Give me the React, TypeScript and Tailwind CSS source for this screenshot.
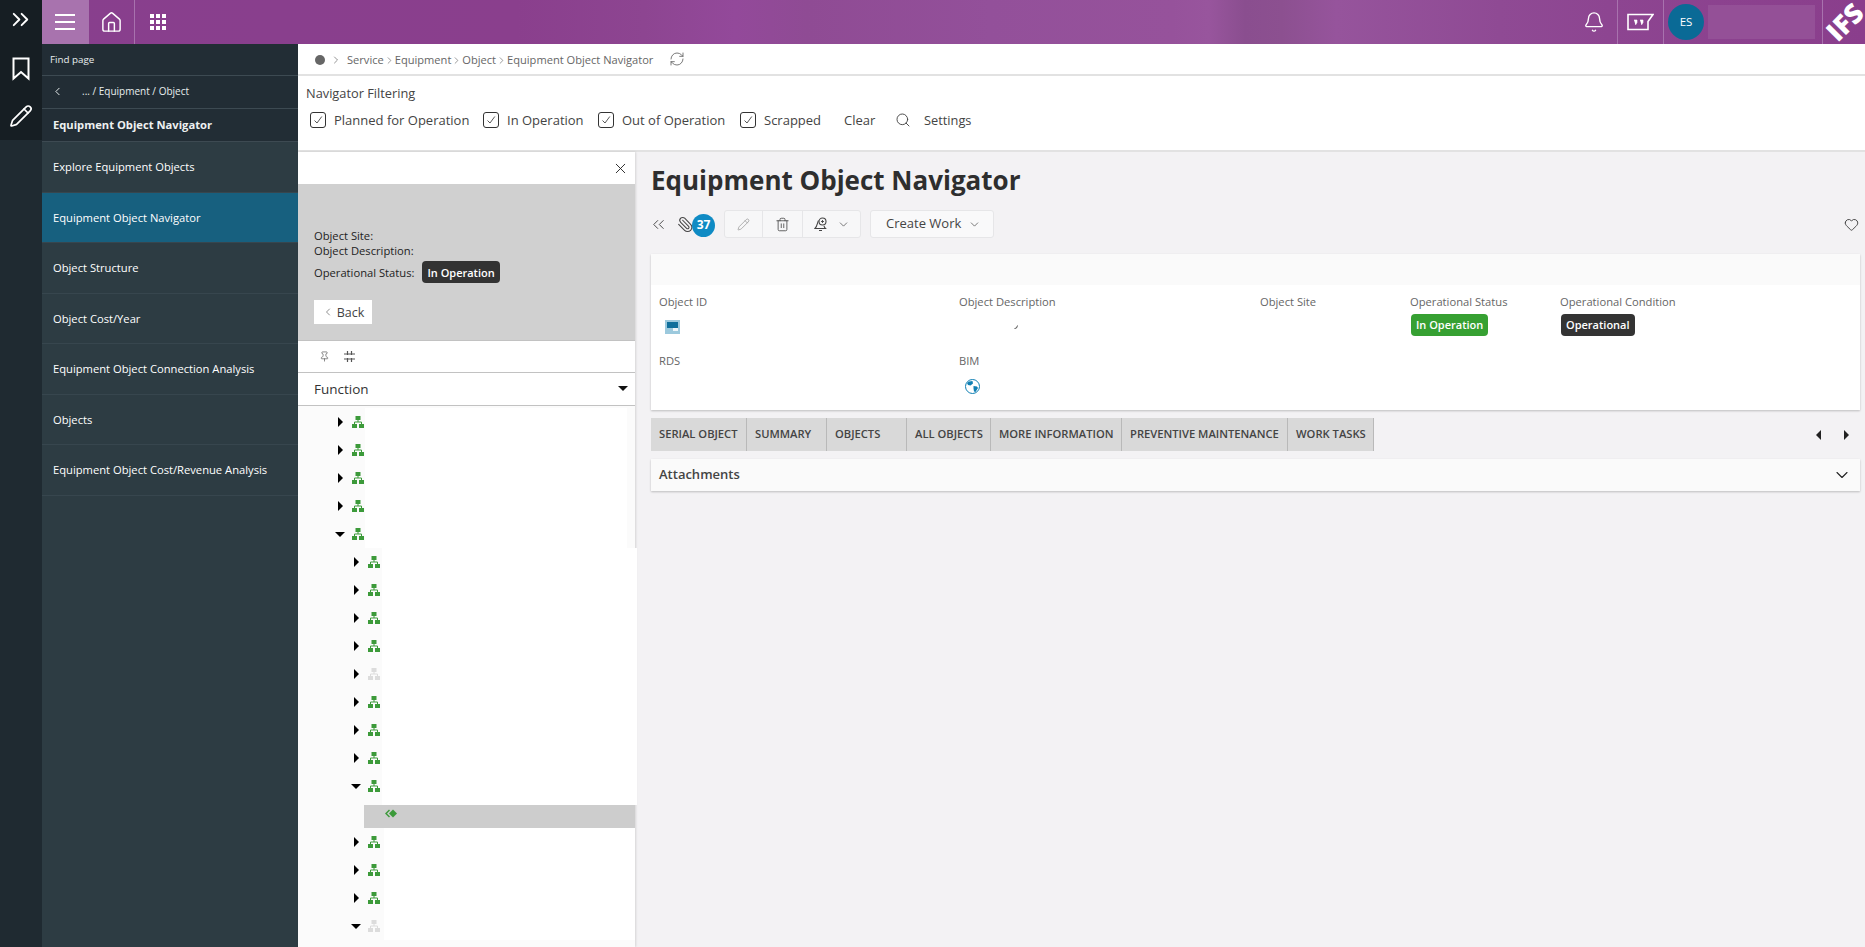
import React from 'react';
import { Bell, ChevronDown, ChevronLeft, ChevronRight, ChevronsLeft, ChevronsRight, Heart, House, Paperclip, Pencil, Pin, RefreshCw, Search, Trash2, X } from 'lucide-react';

const sideItems = [
  'Explore Equipment Objects',
  'Equipment Object Navigator',
  'Object Structure',
  'Object Cost/Year',
  'Equipment Object Connection Analysis',
  'Objects',
  'Equipment Object Cost/Revenue Analysis',
];

const tabs = [
  { label: 'Serial Object', w: 'w-[96px]' },
  { label: 'Summary', w: 'w-[80px]' },
  { label: 'Objects', w: 'w-[80px]' },
  { label: 'All Objects', w: 'w-[84px]' },
  { label: 'More Information', w: 'w-[131px]' },
  { label: 'Preventive Maintenance', w: 'w-[166px]' },
  { label: 'Work Tasks', w: 'w-[86px]' },
];

const filters = [
  { label: 'Planned for Operation', w: 'w-[173px]' },
  { label: 'In Operation', w: 'w-[115px]' },
  { label: 'Out of Operation', w: 'w-[142px]' },
  { label: 'Scrapped', w: 'w-[104px]' },
];

type TreeRow = { level: 0 | 1; open?: boolean; muted?: boolean; tall?: boolean; inset?: boolean };

const treeTop: TreeRow[] = [
  { level: 0 },
  { level: 0 },
  { level: 0 },
  { level: 0 },
  { level: 0, open: true },
  { level: 1 },
  { level: 1 },
  { level: 1 },
  { level: 1 },
  { level: 1, muted: true },
  { level: 1 },
  { level: 1 },
  { level: 1 },
  { level: 1, open: true, tall: true },
];

const treeBottom: TreeRow[] = [
  { level: 1, inset: true },
  { level: 1, inset: true },
  { level: 1, inset: true },
  { level: 1, open: true, muted: true, inset: true },
];

const OrgIcon = ({ muted }: { muted?: boolean }) => (
  <svg width="12" height="12" viewBox="0 0 12 12" className={muted ? 'text-[#dcdcdc]' : 'text-[#3c9a3a]'}>
    <rect x="3.5" y="0" width="5" height="4" fill="currentColor" />
    <path d="M6 4v2M2.5 8V6h7v2" stroke="currentColor" strokeWidth="1" fill="none" />
    <rect x="0" y="8" width="5" height="4" fill="currentColor" />
    <rect x="7" y="8" width="5" height="4" fill="currentColor" />
  </svg>
);

const Caret = ({ open }: { open?: boolean }) => (
  <svg width="10" height="10" viewBox="0 0 10 10" className="text-black">
    {open ? <polygon points="0,3 10,3 5,8" fill="currentColor" /> : <polygon points="3,0 8,5 3,10" fill="currentColor" />}
  </svg>
);

const TreeItem = ({ row }: { row: TreeRow }) => (
  <div className={`flex ${row.tall ? 'h-[33px]' : 'h-[28px]'} ${row.level === 0 ? 'pl-[37px]' : 'pl-[53px]'}`}>
    <div className="flex h-[28px] items-center">
      <Caret open={row.open} />
      <div className="ml-[7px]">
        <OrgIcon muted={row.muted} />
      </div>
    </div>
    <div
      className={`flex-1 bg-white ${row.level === 0 ? 'ml-[1px] mr-[8px]' : row.inset ? 'ml-[4px]' : 'ml-[2px] mr-[-2px]'}`}
    />
  </div>
);

const Checkbox = () => (
  <span className="flex h-[16px] w-[16px] items-center justify-center rounded-[3px] border border-[#333]">
    <svg width="10" height="10" viewBox="0 0 10 10" fill="none" stroke="#444" strokeWidth="0.9">
      <path d="M1.5 5.5 4 8l4.8-6.5" />
    </svg>
  </span>
);

const Label = ({ children }: { children: React.ReactNode }) => (
  <div className="h-[16px] text-[11.2px] leading-[16px] text-[#666]">{children}</div>
);

export default function App() {
  return (
    <div className="flex h-[947px] w-[1865px] overflow-hidden bg-[#f3f2f4] font-['Open_Sans',sans-serif]">
      {/* icon rail */}
      <div className="flex w-[42px] shrink-0 flex-col bg-[#1f2a31]">
        <div className="flex h-[140px] flex-col items-center bg-[#161e23] text-white">
          <ChevronsRight size={27} strokeWidth={1.7} className="mt-[6px] -translate-x-[1px]" />
          <svg width="18" height="24" viewBox="0 0 18 24" fill="none" stroke="currentColor" strokeWidth="2" className="mt-[24px]">
            <path d="M1.5 1.5h15v20L9 15l-7.5 6.5z" />
          </svg>
          <Pencil size={24} strokeWidth={1.7} className="mt-[23px]" />
        </div>
      </div>

      <div className="flex min-w-0 flex-1 flex-col">
        {/* top bar */}
        <div className="flex h-[44px] shrink-0 items-stretch bg-[linear-gradient(90deg,#883f8d_0%,#8a3f8d_26%,#8d4591_33%,#93499a_38%,#8f4b94_42%,#93509a_52%,#96529b_62%,#98559d_64%,#8a4e8f_66%,#8c5090_68%,#96549c_71%,#8f4a94_80%,#8d4591_86%,#8a3e8c_100%)]">
          <div className="flex w-[47px] items-center bg-[#a873ae] pl-[13px]">
            <div className="flex w-[20px] flex-col gap-[5px]">
              <div className="h-[2px] bg-white" />
              <div className="h-[2px] bg-white" />
              <div className="h-[2px] bg-white" />
            </div>
          </div>
          <div className="flex w-[46px] items-center justify-center border-r border-[#a872ae] text-white">
            <House size={23} strokeWidth={1.5} />
          </div>
          <div className="flex w-[46px] items-center justify-center text-white">
            <svg width="16" height="16" viewBox="0 0 16 16" fill="currentColor">
              <rect x="0" y="0" width="4" height="4" />
              <rect x="6" y="0" width="4" height="4" />
              <rect x="12" y="0" width="4" height="4" />
              <rect x="0" y="6" width="4" height="4" />
              <rect x="6" y="6" width="4" height="4" />
              <rect x="12" y="6" width="4" height="4" />
              <rect x="0" y="12" width="4" height="4" />
              <rect x="6" y="12" width="4" height="4" />
              <rect x="12" y="12" width="4" height="4" />
            </svg>
          </div>
          <div className="flex-1" />
          <div className="flex w-[46px] items-center justify-center border-r border-[#a872ae] pr-[2px] text-white">
            <Bell size={22} strokeWidth={1.5} />
          </div>
          <div className="flex w-[46px] items-center justify-center border-r border-[#a872ae] text-white">
            <svg width="27" height="18" viewBox="0 0 27 18" fill="none" stroke="currentColor" strokeWidth="1.6">
              <path d="M1 1.5h25l-5 7V16.5H1z" />
              <path d="M7 7h3v2.5L8.5 12M13 7h3v2.5L14.5 12" fill="currentColor" strokeWidth="0.6" />
            </svg>
          </div>
          <div className="flex w-[159px] items-center border-r border-[#a872ae] pl-[4px]">
            <div className="flex h-[36px] w-[36px] items-center justify-center rounded-full bg-[#0a6a96] text-[11.5px] text-white">ES</div>
            <div className="ml-[4px] h-[34px] w-[107px] bg-[#945097]" />
          </div>
          <div className="relative w-[42px] overflow-hidden">
            <span className="absolute left-[2px] top-[7px] origin-center -rotate-45 text-[27px] font-extrabold leading-[30px] text-white">
              IFS
            </span>
          </div>
        </div>

        <div className="flex min-h-0 flex-1">
          {/* page nav */}
          <div className="flex w-[256px] shrink-0 flex-col bg-[#2d3c43] text-white">
            <div className="flex h-[32px] items-center border-b border-[#3d4a52] bg-[#222d35] pl-[8px] pt-[2px] text-[9.8px] text-[#e8eeee]">Find page</div>
            <div className="flex h-[33px] items-center border-b border-[#3d4a52] bg-[#222d35] pb-[1px] pl-[9px] text-[10px] text-[#e8eeee]">
              <ChevronLeft size={13} strokeWidth={1.8} />
              <span className="ml-[18px]">... / Equipment / Object</span>
            </div>
            <div className="flex h-[33px] items-center border-b border-[#3d4a52] bg-[#222d35] pl-[11px] text-[11.2px] font-bold text-[#eef1f1]">Equipment Object Navigator</div>
            {sideItems.map((item, i) => (
              <div
                key={item}
                className={`flex h-[50.5px] items-center border-b border-[#37464e] pl-[11px] pt-[2px] text-[11.2px] font-medium ${i === 1 ? 'bg-[#17607f]' : 'bg-[#2d3c43]'}`}
              >
                {item}
              </div>
            ))}
          </div>

          <div className="flex min-w-0 flex-1 flex-col">
            {/* breadcrumb */}
            <div className="flex h-[32px] shrink-0 items-center border-b-2 border-[#e2e2e2] bg-white pl-[17px] pt-[2px] text-[11.1px] text-[#666]">
              <span className="h-[10px] w-[10px] rounded-full bg-[#666]" />
              <ChevronRight size={12} strokeWidth={1.4} className="ml-[5px]" />
              <span className="ml-[5px]">Service</span>
              <ChevronRight size={11} strokeWidth={1.4} />
              <span>Equipment</span>
              <ChevronRight size={11} strokeWidth={1.4} />
              <span>Object</span>
              <ChevronRight size={11} strokeWidth={1.4} />
              <span>Equipment Object Navigator</span>
              <RefreshCw size={16} strokeWidth={1.3} className="ml-[16px] -translate-y-[1px]" />
            </div>

            {/* filter bar */}
            <div className="h-[76px] shrink-0 border-b-2 border-[#e2e2e2] bg-white pl-[8px] pt-[7px] text-[#444]">
              <div className="h-[20px] text-[12.8px] leading-[20px]">Navigator Filtering</div>
              <div className="mt-[5px] flex h-[24px] items-center pl-[4px] text-[13px]">
                {filters.map(f => (
                  <div key={f.label} className={`flex items-center gap-[8px] ${f.w}`}>
                    <Checkbox />
                    <span className="translate-y-[1px]">{f.label}</span>
                  </div>
                ))}
                <span className="w-[51px] translate-y-[1px]">Clear</span>
                <Search size={16} strokeWidth={1.4} />
                <span className="ml-[13px] translate-y-[1px] text-[12.8px]">Settings</span>
              </div>
            </div>

            <div className="flex min-h-0 flex-1">
              {/* tree panel */}
              <div className="relative z-10 flex w-[337px] shrink-0 flex-col bg-white shadow-[1px_0_2px_rgba(0,0,0,0.12)]">
                <div className="flex h-[32px] shrink-0 items-center justify-end pr-[6px] text-[#222]">
                  <X size={17} strokeWidth={1.3} />
                </div>
                <div className="h-[156px] shrink-0 bg-[#d0d0d0] pl-[16px] pt-[44px] text-[11.2px] leading-[15px] text-[#222]">
                  <div>Object Site:</div>
                  <div>Object Description:</div>
                  <div className="mt-[3px] flex items-center">
                    <span>Operational Status:</span>
                    <span className="ml-[8px] flex h-[22px] items-center rounded-[4px] bg-[#333] px-[5px] text-[11px] font-semibold text-white">In Operation</span>
                  </div>
                  <div className="mt-[17px] flex h-[24px] w-[58px] items-center justify-center bg-white text-[12.5px] text-[#444]">
                    <ChevronLeft size={12} strokeWidth={1.2} className="mr-[3px]" />
                    Back
                  </div>
                </div>
                <div className="flex h-[33px] shrink-0 items-center gap-[14px] border-b border-t border-[#c2c2c2] pl-[21px] text-[#555]">
                  <Pin size={11} strokeWidth={1.5} />
                  <svg width="11" height="11" viewBox="0 0 11 11" fill="none" stroke="currentColor" strokeWidth="1.2">
                    <path d="M0 3h11M0 8h11M3.5 0v4M7.5 0v4M3.5 7v4M7.5 7v4" />
                  </svg>
                </div>
                <div className="flex h-[33px] shrink-0 items-center justify-between border-b border-[#c2c2c2] pl-[16px] pr-[7px] text-[13.5px] text-[#333]">
                  <span>Function</span>
                  <svg width="10" height="6" viewBox="0 0 10 6">
                    <polygon points="0,0 10,0 5,5" fill="#111" />
                  </svg>
                </div>
                <div className="min-h-0 flex-1 bg-[#fbfbfb] pt-[2px]">
                  {treeTop.map((row, i) => (
                    <TreeItem key={i} row={row} />
                  ))}
                  <div className="ml-[66px] flex h-[23px] bg-[#cdcdcd] pl-[21px] pt-[4px]">
                    <svg width="12" height="9" viewBox="0 0 12 9" className="text-[#3c9a3a]" fill="currentColor">
                      <path d="M4 0.5 0 4.5l4 4 1-1-3-3 3-3z" />
                      <path d="M8 0.5 12 4.5 8 8.5 4 4.5z" />
                    </svg>
                  </div>
                  {treeBottom.map((row, i) => (
                    <TreeItem key={i} row={row} />
                  ))}
                </div>
              </div>

              {/* main */}
              <div className="min-w-0 flex-1 pl-[16px] pr-[5px] pt-[10px]">
                <h1 className="h-[36px] text-[26px] font-bold leading-[36px] text-[#2e2e2e]">Equipment Object Navigator</h1>
                <div className="mt-[12px] flex h-[28px] items-center text-[#555]">
                  <ChevronsLeft size={19} strokeWidth={1.2} className="-ml-[2px] text-[#444]" />
                  <Paperclip size={17} strokeWidth={1.5} className="ml-[9px] -scale-x-100 text-[#444]" />
                  <span className="ml-[-2px] flex h-[23px] w-[23px] translate-y-[1px] items-center justify-center rounded-full bg-[#0f8bc4] text-[12px] font-bold text-white">37</span>
                  <div className="ml-[9px] flex h-[28px] w-[137px] items-center rounded-[3px] border border-[#e6e6e8] bg-[#f7f7f8]">
                    <div className="flex h-full w-[38px] items-center justify-center border-r border-[#e6e6e8] text-[#999]">
                      <Pencil size={13} strokeWidth={1.4} />
                    </div>
                    <div className="flex h-full w-[40px] items-center justify-center border-r border-[#e6e6e8] text-[#444]">
                      <Trash2 size={15} strokeWidth={1.3} />
                    </div>
                    <div className="flex flex-1 items-center justify-center gap-[9px] text-[#444]">
                      <svg width="14" height="15" viewBox="0 0 14 15" fill="none" stroke="currentColor" strokeWidth="1.1">
                        <path d="M4.5 3.500C3.500 5 3.500 9 1 11.500h10.500c-.8-.8-1.200-1.700-1.500-2.700M5 13.500h3" />
                        <circle cx="8.500" cy="4.500" r="3.500" />
                        <path d="M8.500 3v3M7 4.500h3" strokeWidth="0.9" />
                      </svg>
                      <ChevronDown size={13} strokeWidth={1.3} />
                    </div>
                  </div>
                  <div className="ml-[9px] flex h-[28px] w-[124px] items-center gap-[7px] rounded-[3px] border border-[#e6e6e8] bg-[#f9f9fa] pl-[15px] text-[13px] text-[#444]">
                    Create Work
                    <ChevronDown size={13} strokeWidth={1.3} />
                  </div>
                  <Heart size={15} strokeWidth={1.4} className="ml-auto mr-[1px] text-[#333]" />
                </div>

                {/* object card */}
                <div className="mt-[16px] h-[156px] bg-white shadow-[0_1px_2px_rgba(0,0,0,0.22)]">
                  <div className="h-[31px] bg-[#fafafa]" />
                  <div className="grid grid-cols-[300px_301px_150px_150px_1fr] pl-[8px] pt-[9px]">
                    <div className="h-[59px]">
                      <Label>Object ID</Label>
                      <svg width="15" height="14" viewBox="0 0 15 14" className="ml-[6px] mt-[10px]">
                        <rect width="15" height="14" fill="#9cc9dd" />
                        <rect x="2" y="2" width="11" height="6" fill="#0f6f9c" />
                        <rect x="8" y="8" width="5" height="3" fill="#eef6fa" />
                      </svg>
                    </div>
                    <div className="relative">
                      <Label>Object Description</Label>
                      <svg width="4" height="4" viewBox="0 0 4 4" className="absolute left-[55px] top-[31px]">
                        <path d="M3.500 0.500 2.500 3 0.500 3.500" stroke="#555" fill="none" />
                      </svg>
                    </div>
                    <div>
                      <Label>Object Site</Label>
                    </div>
                    <div>
                      <Label>Operational Status</Label>
                      <span className="ml-[1px] mt-[4px] inline-flex h-[22px] items-center rounded-[4px] bg-[#36a032] px-[5px] text-[11px] font-semibold text-white">In Operation</span>
                    </div>
                    <div>
                      <Label>Operational Condition</Label>
                      <span className="ml-[1px] mt-[4px] inline-flex h-[22px] items-center rounded-[4px] bg-[#333] px-[5px] text-[11px] font-semibold text-white">Operational</span>
                    </div>
                    <div>
                      <Label>RDS</Label>
                    </div>
                    <div>
                      <Label>BIM</Label>
                      <svg width="15" height="15" viewBox="0 0 15 15" className="ml-[6px] mt-[10px]">
                        <circle cx="7.500" cy="7.500" r="7" fill="#fff" stroke="#0f7fb3" strokeWidth="1" />
                        <path d="M4 2.500 7.500 2 8 4.500 5.500 6.500 3 6 2 4zM8.500 7 12 7.500 13 9 10.500 13 9 12.500 8.500 9.500z" fill="#0f7fb3" />
                      </svg>
                    </div>
                  </div>
                </div>

                {/* tabs */}
                <div className="mt-[8px] flex h-[33px] items-stretch">
                  {tabs.map(t => (
                    <div key={t.label} className={`flex items-center border-r border-[#b9b9b9] bg-[#d9d9d9] pl-[8px] text-[11.2px] font-semibold uppercase text-[#444] ${t.w}`}>
                      {t.label}
                    </div>
                  ))}
                  <div className="ml-auto flex items-center gap-[19px] pr-[10px]">
                    <svg width="8" height="10" viewBox="0 0 8 10">
                      <polygon points="6,0 1,5 6,10" fill="#222" />
                    </svg>
                    <svg width="8" height="10" viewBox="0 0 8 10">
                      <polygon points="2,0 7,5 2,10" fill="#222" />
                    </svg>
                  </div>
                </div>

                {/* attachments */}
                <div className="mt-[8px] flex h-[32px] items-center justify-between bg-[#fafafa] pl-[8px] pr-[8px] text-[13px] font-semibold text-[#444] shadow-[0_1px_2px_rgba(0,0,0,0.22)]">
                  <span>Attachments</span>
                  <ChevronDown size={20} strokeWidth={1.3} className="text-[#222]" />
                </div>
              </div>
            </div>
          </div>
        </div>
      </div>
    </div>
  );
}
